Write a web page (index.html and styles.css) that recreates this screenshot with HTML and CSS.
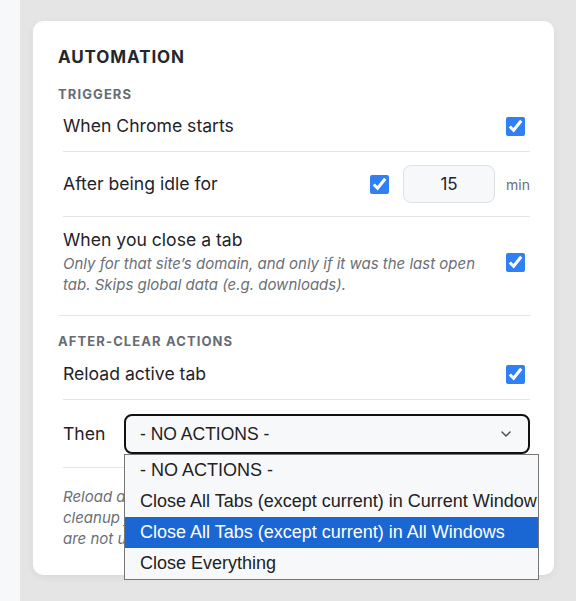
FILE: index.html
```html
<!DOCTYPE html>
<html lang="en">
<head>
    <meta charset="UTF-8">
    <meta name="viewport" content="width=device-width, initial-scale=1.0">
    <title>Automation Settings</title>
    <link rel="stylesheet" href="styles.css">
</head>
<body>

    <div class="app">
        <aside class="sidebar"></aside>

        <main class="main">
            <section class="card">
                <h2 class="card-title">AUTOMATION</h2>

                <div class="group">
                    <h3 class="group-label">TRIGGERS</h3>

                    <div class="row">
                        <span class="row-label">When Chrome starts</span>
                        <input type="checkbox" class="check" checked>
                    </div>

                    <div class="row">
                        <span class="row-label">After being idle for</span>
                        <div class="idle-controls">
                            <input type="checkbox" class="check check-inline" checked>
                            <input type="text" class="minutes" value="15">
                            <span class="unit">min</span>
                        </div>
                    </div>

                    <div class="row">
                        <div class="row-text">
                            <span class="row-label">When you close a tab</span>
                            <p class="row-desc">Only for that site’s domain, and only if it was the last open tab. Skips global data (e.g. downloads).</p>
                        </div>
                        <input type="checkbox" class="check" checked>
                    </div>
                </div>

                <div class="group group-actions">
                    <h3 class="group-label">AFTER-CLEAR ACTIONS</h3>

                    <div class="row">
                        <span class="row-label">Reload active tab</span>
                        <input type="checkbox" class="check" checked>
                    </div>

                    <div class="row row-then">
                        <span class="row-label then-label">Then</span>
                        <div class="select-wrap">
                            <div class="select-box">
                                <span>- NO ACTIONS -</span>
                                <svg class="chevron" width="10" height="6" viewBox="0 0 10 6">
                                    <path d="M1 1l4 4 4-4" fill="none" stroke="#4b5058" stroke-width="1.5" stroke-linecap="round" stroke-linejoin="round"/>
                                </svg>
                            </div>
                            <ul class="select-menu">
                                <li class="option">- NO ACTIONS -</li>
                                <li class="option">Close All Tabs (except current) in Current Window</li>
                                <li class="option selected">Close All Tabs (except current) in All Windows</li>
                                <li class="option">Close Everything</li>
                            </ul>
                        </div>
                    </div>

                    <p class="note">Reload and close actions run after an automatic<br>cleanup finishes. Pinned tabs and unsaved forms<br>are not unloaded or closed.</p>
                </div>
            </section>
        </main>
    </div>

</body>
</html>
```

FILE: styles.css
```css
body {
    margin: 0;
    padding: 0;
    font-family: Inter, "Noto Sans", sans-serif;
    color: #1f2329;
    background-color: #e5e5e5;
}

.app {
    display: flex;
    min-height: 100vh;
}

.sidebar {
    width: 20px;
    background-color: #f7f8fa;
}

.main {
    flex: 1;
    padding: 21px 22px 0 13px;
    background-color: #e5e5e5;
}

.card {
    background-color: white;
    border-radius: 10px;
    padding: 24px 24px 26px 25px;
    box-shadow: 0px 2px 8px rgba(0, 0, 0, 0.06);
}

.card-title {
    margin: 0 0 18px;
    font-size: 17px;
    line-height: 24px;
    font-weight: 700;
    letter-spacing: 0.9px;
    color: #24272c;
}

.group-label {
    margin: 0;
    font-size: 13px;
    line-height: 14px;
    font-weight: 700;
    letter-spacing: 1.1px;
    color: #666b75;
}

.group {
    padding-bottom: 7px;
    border-bottom: 1px solid #e3e5e9;
}

.group-actions {
    padding-top: 18px;
    padding-bottom: 0;
    border-bottom: none;
}

.group-actions .group-label {
    margin-bottom: 1px;
}

.row {
    display: flex;
    align-items: center;
    justify-content: space-between;
    margin-left: 5px;
    padding: 13px 0;
    border-bottom: 1px solid #e3e5e9;
}

.group > .row:last-child {
    border-bottom: none;
}

.row-label {
    font-size: 17.6px;
    line-height: 24px;
}

.row-text .row-label {
    display: block;
    line-height: 20px;
}

.row-desc {
    margin: 3px 0 0;
    max-width: 420px;
    font-size: 15px;
    line-height: 21px;
    font-style: italic;
    color: #6b6f78;
}

.check {
    width: 19px;
    height: 19px;
    margin: 0 5px 0 0;
    accent-color: #2f80f4;
    flex-shrink: 0;
}

.idle-controls {
    display: flex;
    align-items: center;
}

.check-inline {
    margin: 0;
}

.minutes {
    width: 92px;
    height: 38px;
    box-sizing: border-box;
    margin-left: 14px;
    border: 1px solid #dde0e5;
    border-radius: 8px;
    background-color: #f7f8fa;
    font-family: Inter, sans-serif;
    font-size: 17px;
    color: #1f2329;
    text-align: center;
}

.unit {
    margin-left: 11px;
    font-size: 14px;
    color: #6b6f78;
}

.row-then {
    padding: 14px 0 13px;
}

.then-label {
    width: 61px;
    flex-shrink: 0;
}

.select-wrap {
    position: relative;
    flex: 1;
}

.select-box {
    display: flex;
    align-items: center;
    justify-content: space-between;
    height: 40px;
    box-sizing: border-box;
    padding: 0 17px 0 14px;
    border: 2px solid #111;
    border-radius: 8px;
    background-color: #f7f8fa;
    font-family: "Liberation Sans", Arial, sans-serif;
    font-size: 17.5px;
    color: #222;
}

.select-menu {
    position: absolute;
    top: 100%;
    left: 0;
    width: 415px;
    box-sizing: border-box;
    margin: 0;
    padding: 0;
    list-style: none;
    border: 1px solid #767676;
    background-color: #f7f8fa;
    font-family: "Liberation Sans", Arial, sans-serif;
    font-size: 18px;
    color: #222;
    z-index: 10;
}

.option {
    height: 31px;
    line-height: 31px;
    padding-left: 15px;
    white-space: nowrap;
}

.option.selected {
    background-color: #1a66d2;
    color: white;
}

.note {
    margin: 18px 0 0 5px;
    font-size: 15px;
    line-height: 21px;
    font-style: italic;
    color: #6b6f78;
}
```
